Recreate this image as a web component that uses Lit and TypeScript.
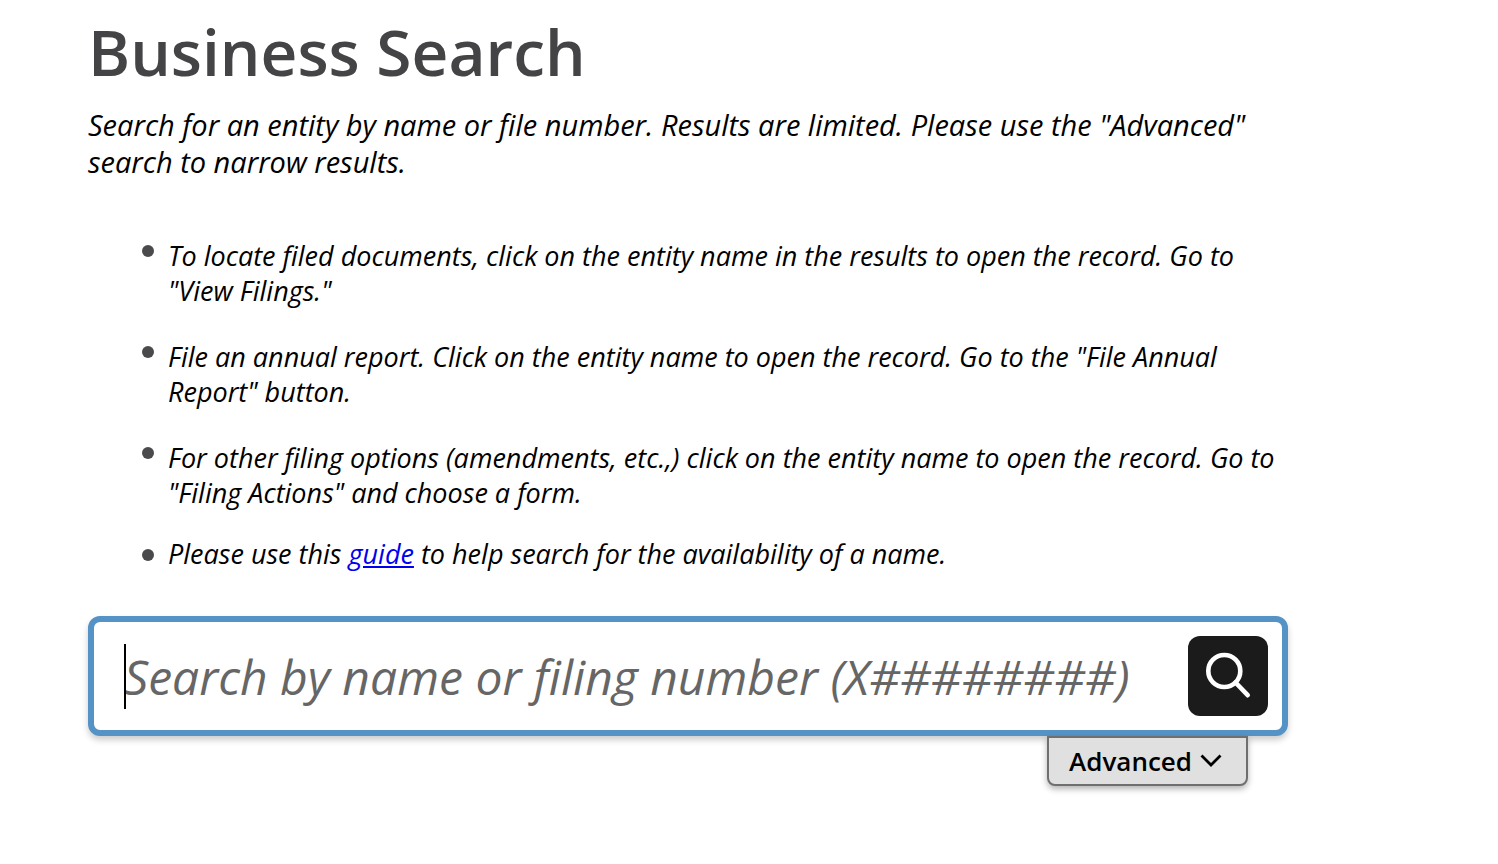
import { LitElement, html, css } from "lit";
import { customElement } from "lit/decorators.js";

@customElement("app-root")
export class AppRoot extends LitElement {
  static styles = css`
    :host {
      display: block;
      font-family: "Open Sans", "Noto Sans", sans-serif;
      color: #000;
      background: #fff;
    }
    * { box-sizing: border-box; }
    .page { padding: 8px 210px 78px 88px; }
    h1 {
      margin: 0;
      font-size: 64px;
      line-height: 88px;
      font-weight: 600;
      color: #444345;
    }
    .intro {
      margin: 10px 0 0;
      font-size: 29px;
      line-height: 37px;
      font-style: italic;
    }
    .tips {
      list-style: none;
      margin: 58px 0 0;
      padding: 0 0 0 54px;
      display: grid;
      gap: 31px;
      font-size: 27px;
      line-height: 35px;
      font-style: italic;
    }
    .tip { display: flex; gap: 14px; }
    .tip::before {
      content: "";
      flex: none;
      width: 12px;
      height: 12px;
      margin-top: 7px;
      border-radius: 50%;
      background: #4a494b;
    }
    .tip:last-child { margin-top: -5px; }
    .tip:last-child::before { margin-top: 13px; }
    .tips a { color: #0000ee; }
    .search {
      display: flex;
      align-items: center;
      margin-top: 45px;
      padding: 14px 14px 14px 30px;
      border: 6px solid #5593c7;
      border-radius: 12px;
      background: #fff;
      box-shadow: 0 4px 6px rgba(0, 0, 0, 0.2);
    }
    .box {
      position: relative;
      flex: 1;
      min-width: 0;
    }
    .field {
      display: block;
      width: 100%;
      height: 80px;
      padding: 0;
      border: 0;
      outline: 0;
      background: none;
      font: italic 48px/66px "Open Sans", "Noto Sans", sans-serif;
      color: #000;
      caret-color: transparent;
    }
    .field::placeholder { color: #666; opacity: 1; }
    .caret {
      display: none;
      position: absolute;
      left: 0;
      top: 8px;
      bottom: 7px;
      width: 2px;
      background: #000;
      pointer-events: none;
    }
    .field:placeholder-shown + .caret { display: block; }
    .field:not(:placeholder-shown) { caret-color: #000; }
    .go {
      flex: none;
      display: grid;
      place-items: center;
      width: 80px;
      height: 80px;
      padding: 0;
      border: 0;
      border-radius: 12px;
      background: #1b1b1b;
    }
    .more { display: flex; justify-content: flex-end; padding-right: 40px; }
    .advanced {
      display: flex;
      align-items: center;
      gap: 8px;
      height: 50px;
      padding: 0 24px 0 20px;
      border: 2px solid #6f6f6f;
      border-radius: 0 0 8px 8px;
      background: #e0e0e0;
      box-shadow: 0 3px 6px rgba(0, 0, 0, 0.3);
      font: 600 26px/34px "Open Sans", "Noto Sans", sans-serif;
      color: #000;
    }
  `;

  firstUpdated() {
    this.renderRoot.querySelector<HTMLInputElement>(".field")?.focus();
  }

  render() {
    return html`
      <main class="page">
        <h1>Business Search</h1>
        <p class="intro">
          Search for an entity by name or file number. Results are limited. Please use the "Advanced" search to narrow results.
        </p>
        <ul class="tips">
          <li class="tip"><span>To locate filed documents, click on the entity name in the results to open the record. Go to "View Filings."</span></li>
          <li class="tip"><span>File an annual report. Click on the entity name to open the record. Go to the "File Annual Report" button.</span></li>
          <li class="tip"><span>For other filing options (amendments, etc.,) click on the entity name to open the record. Go to "Filing Actions" and choose a form.</span></li>
          <li class="tip"><span>Please use this <a href="#guide">guide</a> to help search for the availability of a name.</span></li>
        </ul>
        <form class="search" role="search" @submit=${(e: Event) => e.preventDefault()}>
          <div class="box">
            <input class="field" type="text" aria-label="Search by name or filing number" placeholder="Search by name or filing number (X########)" />
            <span class="caret"></span>
          </div>
          <button class="go" type="submit" aria-label="Search">
            <svg width="48" height="48" viewBox="0 0 48 48" fill="none" stroke="#fff" stroke-width="4.6" stroke-linecap="round">
              <circle cx="20.3" cy="19" r="16" />
              <path d="M31.5 30.5 43.7 43.2" />
            </svg>
          </button>
        </form>
        <div class="more">
          <button class="advanced" type="button">
            Advanced
            <svg width="22" height="14" viewBox="0 0 22 14" fill="none" stroke="#000" stroke-width="2.8">
              <path d="M1.5 1.5 11 11 20.5 1.5" />
            </svg>
          </button>
        </div>
      </main>
    `;
  }
}
